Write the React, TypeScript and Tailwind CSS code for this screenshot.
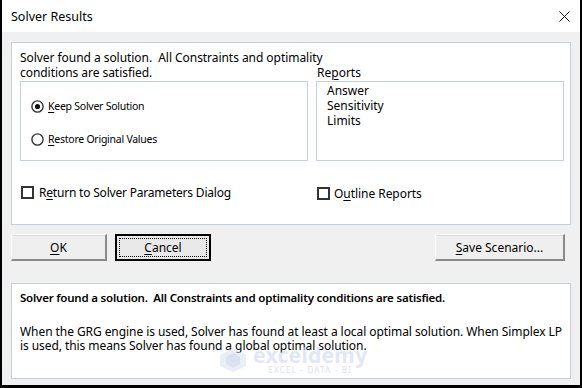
import React from 'react';

const U: React.FC<{ children: React.ReactNode }> = ({ children }) => (
  <span className="underline underline-offset-[2px] decoration-1">{children}</span>
);

const Radio: React.FC<{ checked?: boolean }> = ({ checked }) => (
  <svg width="13" height="13" viewBox="0 0 13 13" className="shrink-0">
    <circle cx="6.5" cy="6.5" r="5.6" fill="white" stroke="#333" strokeWidth="1.4" />
    {checked && <circle cx="6.5" cy="6.5" r="2.6" fill="#111" />}
  </svg>
);

const Checkbox: React.FC = () => (
  <span className="w-[13px] h-[13px] shrink-0 border-2 border-[#333] bg-white" />
);

const Btn: React.FC<{ w: string; focused?: boolean; children: React.ReactNode }> = ({ w, focused, children }) =>
  focused ? (
    <button className={`${w} h-[27px] border-2 border-black bg-[#e9e9e9] p-[2px]`}>
      <span className="flex h-full w-full items-center justify-center border border-dotted border-black">{children}</span>
    </button>
  ) : (
    <button
      className={`${w} h-[27px] flex items-center justify-center bg-[#efefef] border-t border-l border-t-white border-l-white border-b-2 border-r-2 border-b-[#8a8a8a] border-r-[#8a8a8a] shadow-[inset_0_1px_0_#dcdcdc]`}
    >
      {children}
    </button>
  );

export default function App() {
  return (
    <div className="w-[582px] h-[388px] overflow-hidden bg-[#f0f0f0] border-l-2 border-r-2 border-b-[3px] border-black flex flex-col font-['Segoe_UI','Noto_Sans',sans-serif] text-[12px] leading-[15px] text-black">
      {/* Title bar */}
      <div className="h-[32px] shrink-0 bg-white flex items-center justify-between pl-[9px] pr-[10px]">
        <span className="text-[12.5px] mt-[1px]">Solver Results</span>
        <svg width="11" height="11" viewBox="0 0 11 11" className="mt-[1px]">
          <path d="M0.5 0.5 L10.5 10.5 M10.5 0.5 L0.5 10.5" stroke="#111" strokeWidth="1" />
        </svg>
      </div>

      <div className="flex flex-col pl-[9px] pr-[9px]">
        {/* Top panel */}
        <div className="mt-[10px] h-[183px] bg-white border border-[#c3cfdc] pl-[8px] pr-[6px] pt-[7px]">
          <div className="grid grid-cols-[288px_248px] gap-x-[8px]">
            <div className="whitespace-nowrap tracking-[-0.05px]">
              Solver found a solution.&nbsp; All Constraints and optimality
              <br />
              conditions are satisfied.
            </div>
            <div className="pt-[15px] pl-[1px]">
              Re<U>p</U>orts
            </div>

            <div className="mt-[1px] h-[80px] border border-[#c3cfdc] flex flex-col pl-[10px] pt-[17px] gap-[18px]">
              <div className="flex items-center gap-[4px]">
                <Radio checked />
                <span className="text-[10.5px] tracking-[-0.25px]">
                  <U>K</U>eep Solver Solution
                </span>
              </div>
              <div className="flex items-center gap-[4px]">
                <Radio />
                <span className="text-[10.5px] tracking-[-0.25px]">
                  <U>R</U>estore Original Values
                </span>
              </div>
            </div>
            <div className="mt-[1px] h-[80px] border border-[#c3cfdc] pl-[10px] pt-[1px]">
              <div>Answer</div>
              <div>Sensitivity</div>
              <div>Limits</div>
            </div>

            <div className="mt-[22px] flex items-center gap-[5px] pl-[1px]">
              <Checkbox />
              <span className="tracking-[-0.2px]">
                R<U>e</U>turn to Solver Parameters Dialog
              </span>
            </div>
            <div className="mt-[25px] flex items-center gap-[4px] pl-[1px]">
              <Checkbox />
              <span className="tracking-[-0.05px]">
                O<U>u</U>tline Reports
              </span>
            </div>
          </div>
        </div>

        {/* Buttons */}
        <div className="mt-[9px] flex items-center">
          <Btn w="w-[96px]">
            <U>O</U>K
          </Btn>
          <div className="ml-[8px]">
            <Btn w="w-[96px]" focused>
              <U>C</U>ancel
            </Btn>
          </div>
          <div className="ml-auto mr-[6px]">
            <Btn w="w-[130px]">
              <U>S</U>ave Scenario...
            </Btn>
          </div>
        </div>

        {/* Bottom panel */}
        <div className="relative mt-[22px] h-[96px] bg-white border border-[#c3cfdc] pl-[8px] pt-[6px] whitespace-nowrap">
          <div className="font-semibold text-[11.5px] tracking-[-0.2px]">
            Solver found a solution.&nbsp; All Constraints and optimality conditions are satisfied.
          </div>
          <div className="mt-[20px] leading-[13.5px] tracking-[-0.07px]">
            When the GRG engine is used, Solver has found at least a local optimal solution. When Simplex LP
            <br />
            is used, this means Solver has found a global optimal solution.
          </div>

          {/* watermark */}
          <div className="absolute left-[207px] top-[61px] flex items-center gap-[6px] opacity-60 pointer-events-none">
            <svg width="28" height="26" viewBox="0 0 28 26">
              <path d="M14 1 L27 8 L27 19 L14 25 L1 19 L1 8 Z" fill="#dbe3f3" />
              <path d="M14 6 L21 10 L21 17 L14 21 L7 17 L7 10 Z" fill="#c4cfe6" />
            </svg>
            <div className="flex flex-col items-center">
              <span className="text-[21px] leading-[20px] font-bold text-[#cdd8f2] tracking-[0.3px]">exceldemy</span>
              <span className="text-[8px] leading-[10px] text-[#c9ced8] tracking-[1.2px]">EXCEL - DATA - BI</span>
            </div>
          </div>
        </div>
      </div>
    </div>
  );
}
